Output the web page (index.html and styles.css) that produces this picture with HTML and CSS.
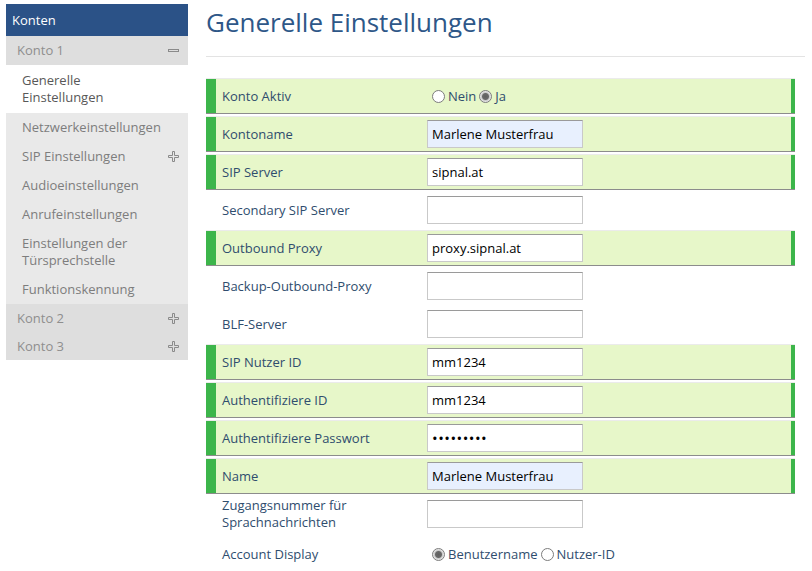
FILE: index.html
```html
<!DOCTYPE html>
<html lang="de">
<head>
<meta charset="utf-8">
<title>Generelle Einstellungen</title>
<link rel="stylesheet" href="styles.css">
</head>
<body>
<div class="page">
  <nav class="sidebar">
    <div class="nav-head">Konten</div>
    <div class="nav-group">
      <span>Konto 1</span>
      <svg class="ico" width="11" height="11" viewBox="0 0 11 11"><rect x="0.5" y="4.5" width="10" height="2" fill="none" stroke="#8a8a8a"/></svg>
    </div>
    <ul class="nav-sub">
      <li class="active">Generelle<br>Einstellungen</li>
      <li>Netzwerkeinstellungen</li>
      <li><span>SIP Einstellungen</span><svg class="ico" width="11" height="11" viewBox="0 0 11 11"><path d="M4.5 0.5H6.5V4.5H10.5V6.5H6.5V10.5H4.5V6.5H0.5V4.5H4.5Z" fill="none" stroke="#8a8a8a"/></svg></li>
      <li>Audioeinstellungen</li>
      <li>Anrufeinstellungen</li>
      <li>Einstellungen der<br>Türsprechstelle</li>
      <li>Funktionskennung</li>
    </ul>
    <div class="nav-group">
      <span>Konto 2</span>
      <svg class="ico" width="11" height="11" viewBox="0 0 11 11"><path d="M4.5 0.5H6.5V4.5H10.5V6.5H6.5V10.5H4.5V6.5H0.5V4.5H4.5Z" fill="none" stroke="#8a8a8a"/></svg>
    </div>
    <div class="nav-group">
      <span>Konto 3</span>
      <svg class="ico" width="11" height="11" viewBox="0 0 11 11"><path d="M4.5 0.5H6.5V4.5H10.5V6.5H6.5V10.5H4.5V6.5H0.5V4.5H4.5Z" fill="none" stroke="#8a8a8a"/></svg>
    </div>
  </nav>

  <main class="main">
    <h1 class="title">Generelle Einstellungen</h1>
    <hr class="rule">
    <form class="form">
      <div class="row on">
        <label class="lbl">Konto Aktiv</label>
        <div class="radios">
          <label class="opt"><input type="radio" name="aktiv" class="rad">Nein</label>
          <label class="opt"><input type="radio" name="aktiv" class="rad" checked>Ja</label>
        </div>
      </div>
      <div class="row on">
        <label class="lbl">Kontoname</label>
        <input class="txt auto" type="text" value="Marlene Musterfrau">
      </div>
      <div class="row on">
        <label class="lbl">SIP Server</label>
        <input class="txt" type="text" value="sipnal.at">
      </div>
      <div class="row">
        <label class="lbl">Secondary SIP Server</label>
        <input class="txt" type="text" value="">
      </div>
      <div class="row on">
        <label class="lbl">Outbound Proxy</label>
        <input class="txt" type="text" value="proxy.sipnal.at">
      </div>
      <div class="row">
        <label class="lbl">Backup-Outbound-Proxy</label>
        <input class="txt" type="text" value="">
      </div>
      <div class="row">
        <label class="lbl">BLF-Server</label>
        <input class="txt" type="text" value="">
      </div>
      <div class="row on">
        <label class="lbl">SIP Nutzer ID</label>
        <input class="txt" type="text" value="mm1234">
      </div>
      <div class="row on">
        <label class="lbl">Authentifiziere ID</label>
        <input class="txt" type="text" value="mm1234">
      </div>
      <div class="row on">
        <label class="lbl">Authentifiziere Passwort</label>
        <input class="txt pw" type="password" value="geheim123">
      </div>
      <div class="row on">
        <label class="lbl">Name</label>
        <input class="txt auto" type="text" value="Marlene Musterfrau">
      </div>
      <div class="row">
        <label class="lbl">Zugangsnummer für<br>Sprachnachrichten</label>
        <input class="txt" type="text" value="">
      </div>
      <div class="row last">
        <label class="lbl">Account Display</label>
        <div class="radios">
          <label class="opt"><input type="radio" name="disp" class="rad" checked>Benutzername</label>
          <label class="opt"><input type="radio" name="disp" class="rad">Nutzer-ID</label>
        </div>
      </div>
    </form>
  </main>
</div>
</body>
</html>
```

FILE: styles.css
```css
html, body {
  margin: 0;
  padding: 0;
  overflow: hidden;
  background: #ffffff;
}

body {
  font-family: "Open Sans", "DejaVu Sans", sans-serif;
  font-size: 13px;
  color: #2d4b6b;
}

.page {
  display: flex;
  align-items: flex-start;
  padding: 4px 7px 0 6px;
}

/* ---------- sidebar ---------- */
.sidebar {
  width: 182px;
  flex: 0 0 182px;
}

.nav-head {
  height: 32px;
  line-height: 32px;
  padding-left: 6px;
  background: #2b5287;
  color: #ffffff;
}

.nav-group {
  display: flex;
  align-items: center;
  justify-content: space-between;
  height: 28px;
  padding: 0 9px 0 11px;
  background: #dedede;
  color: #8e8e8e;
}

.ico {
  display: block;
  flex: 0 0 auto;
}

.nav-sub {
  list-style: none;
  margin: 0;
  padding: 0;
  background: #e9e9e9;
  border-top: 1px solid #dedede;
}

.nav-sub li {
  display: flex;
  align-items: center;
  justify-content: space-between;
  padding: 6px 9px 6px 16px;
  line-height: 17px;
  color: #7d7d7d;
}

.nav-sub li.active {
  padding-top: 7px;
  padding-bottom: 7px;
  background: #ffffff;
  color: #585858;
  display: block;
}

/* ---------- main ---------- */
.main {
  flex: 1 1 auto;
  margin-left: 18px;
  min-width: 0;
}

.title {
  margin: 0;
  font-size: 26px;
  line-height: 36px;
  font-weight: normal;
  color: #2e5788;
}

.rule {
  margin: 16px 0 0 0;
  border: 0;
  border-top: 1px solid #e3e3e3;
  height: 0;
}

.form {
  margin: 21px 10px 0 0;
}

.row {
  display: grid;
  grid-template-columns: 205px 156px;
  align-items: center;
  min-height: 34px;
  padding-left: 16px;
  margin-bottom: 2px;
  border-top: 1px solid transparent;
  border-bottom: 1px solid transparent;
}

.row.last {
  margin-bottom: 0;
  padding-top: 2px;
}

.row.on {
  background: #e7f7c9;
  border-top-color: #ebebeb;
  border-bottom-color: #8c8c8c;
  box-shadow: inset 10px 0 0 #3cb54a, inset -4px 0 0 #3cb54a;
}

.lbl {
  line-height: 17px;
  color: #2f4d6e;
}

.txt {
  box-sizing: border-box;
  width: 156px;
  height: 28px;
  margin: 0;
  padding: 0 4px;
  font-family: "Open Sans", "DejaVu Sans", sans-serif;
  font-size: 13px;
  color: #000000;
  background: #ffffff;
  border: 1px solid #c9c9c9;
  border-top-color: #9a9a9a;
  border-radius: 0;
  outline: none;
}

.txt.pw {
  font-size: 15px;
  letter-spacing: 0.5px;
}

.txt.auto {
  background: #e8f0fe;
}

.radios {
  display: flex;
  align-items: center;
  padding-left: 5px;
  white-space: nowrap;
  color: #2f4d6e;
}

.opt {
  display: flex;
  align-items: center;
  margin-right: 3px;
}

.rad {
  appearance: none;
  -webkit-appearance: none;
  box-sizing: border-box;
  width: 13px;
  height: 13px;
  margin: 0 3px 0 0;
  border: 1px solid #7c7c7c;
  border-radius: 50%;
  background: #ffffff;
}

.rad:checked {
  background: radial-gradient(circle, #5f5f5f 0, #6a6a6a 3px, #c9c9c9 4px, #eeeeee 5.5px);
}
```
